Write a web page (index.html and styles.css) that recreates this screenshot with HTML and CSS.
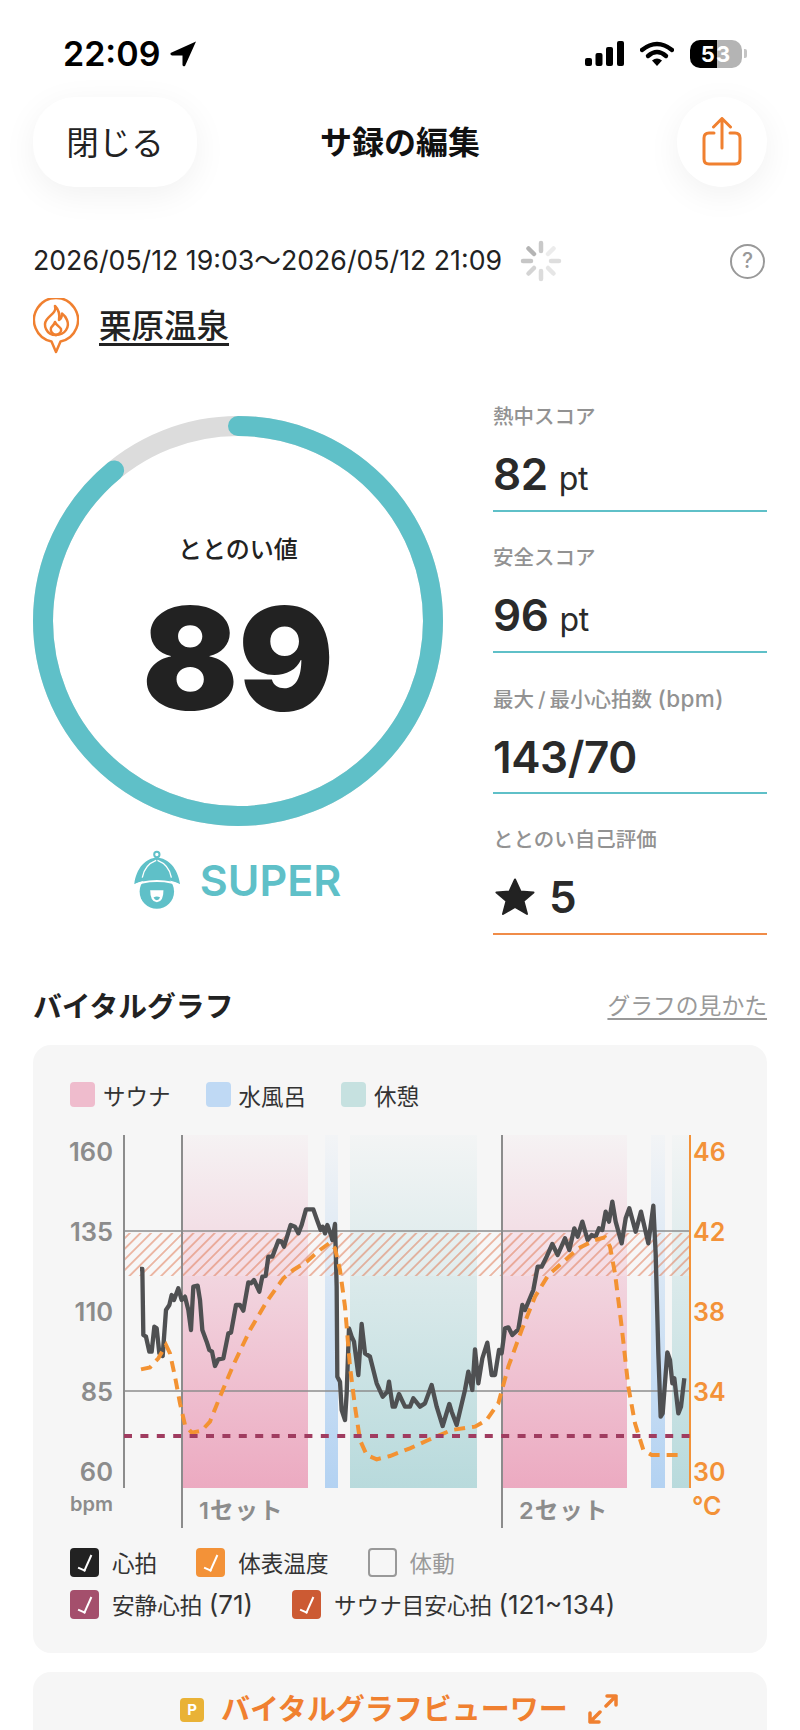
FILE: index.html
```html
<!DOCTYPE html>
<html lang="ja">
<head>
    <meta charset="UTF-8">
    <meta name="viewport" content="width=device-width, initial-scale=1.0">
    <title>サ録の編集</title>
    <link rel="stylesheet" href="styles.css">
</head>
<body>
<div class="page">
    <div class="status">
        <div class="status-left">
            <span class="clock">22:09</span>
            <svg class="loc" width="27" height="26" viewBox="0 0 27 26"><path d="M26 0.5 L0.5 12 Q0 14 2 14.5 L12.5 14.5 L12.5 24 Q13 26 15 25 Z" fill="#000"/></svg>
        </div>
        <div class="status-right">
            <svg width="39" height="25" viewBox="0 0 39 25"><rect x="0" y="17" width="7" height="8" rx="2"/><rect x="10.5" y="12" width="7" height="13" rx="2"/><rect x="21" y="6" width="7" height="19" rx="2"/><rect x="32" y="0" width="7" height="25" rx="2"/></svg>
            <svg width="34" height="25" viewBox="0 0 34 25"><path d="M2 9 Q17 -3 32 9" fill="none" stroke="#000" stroke-width="4.4" stroke-linecap="round"/><path d="M8 15 Q17 7 26 15" fill="none" stroke="#000" stroke-width="4.4" stroke-linecap="round"/><path d="M12 19.5 Q17 15.5 22 19.5 L17 25 Z" fill="#000"/></svg>
            <div class="battery"><span>53</span></div>
            <div class="battery-nub"></div>
        </div>
    </div>

    <div class="nav">
        <div class="close-btn"><span>閉じる</span></div>
        <div class="nav-title">サ録の編集</div>
        <div class="share-btn">
            <svg width="40" height="50" viewBox="0 0 40 50" fill="none" stroke="#f08030" stroke-width="3" stroke-linecap="round" stroke-linejoin="round"><path d="M20 31 V2 M11.5 10 L20 1.5 L28.500 10"/><path d="M12 16 H7 Q2 16 2 21 V42 Q2 47 7 47 H33 Q38 47 38 42 V21 Q38 16 33 16 H28"/></svg>
        </div>
    </div>

    <div class="date-row">
        <span class="date-text">2026/05/12 19:03〜2026/05/12 21:09</span>
        <svg class="spinner" width="42" height="42" viewBox="-21 -21 42 42" stroke-width="4.500" stroke-linecap="round">
            <line x1="0" y1="-10" x2="0" y2="-18" stroke="#c9c9c9"/>
            <line x1="7" y1="-7" x2="12.500" y2="-12.500" stroke="#ececec"/>
            <line x1="10" y1="0" x2="18" y2="0" stroke="#dedede"/>
            <line x1="7" y1="7" x2="12.500" y2="12.500" stroke="#e6e6e6"/>
            <line x1="0" y1="10" x2="0" y2="18" stroke="#dcdcdc"/>
            <line x1="-7" y1="7" x2="-12.500" y2="12.500" stroke="#d4d4d4"/>
            <line x1="-10" y1="0" x2="-18" y2="0" stroke="#c6c6c6"/>
            <line x1="-7" y1="-7" x2="-12.500" y2="-12.500" stroke="#b4b4b4"/>
        </svg>
        <span class="help">?</span>
    </div>

    <div class="place-row">
        <svg width="46" height="56" viewBox="0 0 46 56" fill="none" stroke="#f08030" stroke-width="2.500" stroke-linejoin="round" stroke-linecap="round">
            <path d="M18.500 43.500 A22 22 0 1 1 27.500 43.500 L23 54 Z"/>
            <path d="M22 8 C24 14 17 17 13.500 22 C10 27 13 37 23 37 C32 37 37 29 34 22 C33 19 31 17 29 15.500 C29 19 28 21 26 22 C27 16 25 11 22 8 Z"/>
            <path d="M23 37 C19 36 17 33 18 30 C19 28 21 27 22 24 C23 27 27 29 28 31 C29 34 26 36 23 37"/>
        </svg>
        <span class="place-name">栗原温泉</span>
    </div>

    <div class="hero">
        <div class="score-col">
            <div class="ring-wrap">
                <svg class="ring" width="410" height="410" viewBox="0 0 410 410" fill="none" stroke-width="20">
                    <circle cx="205" cy="205" r="195" stroke="#dcdcdc"/>
                    <circle cx="205" cy="205" r="195" stroke="#5fc0c8" stroke-linecap="round" stroke-dasharray="1090.5 1225.2" transform="rotate(-90 205 205)"/>
                </svg>
                <div class="ring-inner">
                    <div class="ring-label">ととのい値</div>
                    <div class="ring-value">89</div>
                </div>
            </div>
            <div class="rank">
                <svg width="53" height="60" viewBox="20 15 160 180">
                    <circle cx="98" cy="28" r="8" fill="none" stroke="#5fc0c8" stroke-width="6"/>
                    <circle cx="98" cy="140" r="52" fill="#5fc0c8"/>
                    <path d="M30 118 C35 70 65 38 98 38 C132 38 162 70 168 118 C140 100 60 100 30 118 Z" fill="#5fc0c8"/>
                    <path d="M22 126 C60 102 136 102 176 126" fill="none" stroke="#fff" stroke-width="6" stroke-linecap="round"/>
                    <path d="M96 46 C70 56 58 75 54 98 M100 46 C126 56 138 75 142 98" fill="none" stroke="#fff" stroke-width="4"/>
                    <path d="M78 136 H118 Q118 172 98 172 Q78 172 78 136 Z" fill="#fff"/>
                    <path d="M88 158 Q98 152 108 158 Q104 166 98 166 Q92 166 88 158 Z" fill="#5fc0c8"/>
                </svg>
                <span>SUPER</span>
            </div>
        </div>
        <div class="stats">
            <div class="stat">
                <div class="stat-label">熱中スコア</div>
                <div class="stat-value">82<span class="unit">pt</span></div>
            </div>
            <div class="stat">
                <div class="stat-label">安全スコア</div>
                <div class="stat-value">96<span class="unit">pt</span></div>
            </div>
            <div class="stat">
                <div class="stat-label">最大<span class="slash">/</span>最小心拍数 <span class="bpm">(bpm)</span></div>
                <div class="stat-value">143/70</div>
            </div>
            <div class="stat stat-self">
                <div class="stat-label">ととのい自己評価</div>
                <div class="stat-value">
                    <svg class="star" width="40" height="38" viewBox="0 0 40 38"><path d="M20 1.500 L25.500 13.500 L38.500 14.500 L28.500 23 L32 36 L20 29 L8 36 L11.500 23 L1.500 14.500 L14.500 13.500 Z" fill="#222" stroke="#222" stroke-width="2" stroke-linejoin="round"/></svg>
                    5
                </div>
            </div>
        </div>
    </div>

    <div class="graph-head">
        <h2>バイタルグラフ</h2>
        <a class="graph-help">グラフの見かた</a>
    </div>

    <div class="graph-card">
        <div class="legend">
            <div class="legend-item"><i class="sw sw-sauna"></i>サウナ</div>
            <div class="legend-item"><i class="sw sw-water"></i>水風呂</div>
            <div class="legend-item"><i class="sw sw-rest"></i>休憩</div>
        </div>

        <svg class="chart" width="734" height="410" viewBox="33 1125 734 410" fill="none">
            <defs>
                <linearGradient id="gSauna" x1="0" y1="0" x2="0" y2="1"><stop offset="0" stop-color="#ecaac1" stop-opacity=".05"/><stop offset="1" stop-color="#ecaac1"/></linearGradient>
                <linearGradient id="gWater" x1="0" y1="0" x2="0" y2="1"><stop offset="0" stop-color="#b3d2f2" stop-opacity=".05"/><stop offset="1" stop-color="#b3d2f2"/></linearGradient>
                <linearGradient id="gRest" x1="0" y1="0" x2="0" y2="1"><stop offset="0" stop-color="#b8dadc" stop-opacity=".05"/><stop offset="1" stop-color="#b8dadc"/></linearGradient>
                <pattern id="hatch" width="7.500" height="13" patternUnits="userSpaceOnUse" patternTransform="rotate(45)">
                    <rect width="7.500" height="13" fill="#fff" fill-opacity=".14"/>
                    <line x1="3.750" y1="0" x2="3.750" y2="13" stroke="#e07a55" stroke-opacity=".65" stroke-width="1.500"/>
                </pattern>
            </defs>

            <rect x="183" y="1135" width="125" height="353" fill="url(#gSauna)"/>
            <rect x="503" y="1135" width="124" height="353" fill="url(#gSauna)"/>
            <rect x="325" y="1135" width="13" height="353" fill="url(#gWater)"/>
            <rect x="651" y="1135" width="14" height="353" fill="url(#gWater)"/>
            <rect x="350" y="1135" width="127" height="353" fill="url(#gRest)"/>
            <rect x="672" y="1135" width="18" height="353" fill="url(#gRest)"/>

            <rect x="124" y="1233" width="566" height="43" fill="url(#hatch)"/>

            <line x1="124" y1="1231" x2="690" y2="1231" class="grid"/>
            <line x1="124" y1="1391" x2="690" y2="1391" class="grid"/>
            <line x1="124" y1="1135" x2="124" y2="1488" class="axis"/>
            <line x1="182" y1="1135" x2="182" y2="1528" class="axis"/>
            <line x1="502" y1="1135" x2="502" y2="1528" class="axis"/>
            <line x1="690" y1="1135" x2="690" y2="1488" class="axis-temp"/>

            <g transform="translate(30 1120) scale(.33333)">
                <polyline class="hr" points="330,447 337,447 340,645 348,650 358,695 365,695 373,620 380,625 388,700 398,708 408,570 418,555 425,525 432,540 445,505 455,540 465,530 475,570 483,630 490,500 503,497 510,540 517,630 530,665 538,690 546,695 555,738 565,718 580,715 595,640 603,638 618,555 630,555 640,572 655,487 663,490 672,480 688,515 697,470 707,468 715,410 727,410 745,362 755,365 762,380 782,315 795,320 805,340 815,315 828,268 850,268 860,297 872,330 878,320 885,340 892,315 903,345 907,360 915,312 920,500 922,770 930,785 935,870 945,900 950,820 957,625 965,650 972,665 985,765 995,612 1005,700 1020,710 1040,790 1058,830 1072,815 1077,785 1088,860 1095,860 1107,822 1125,860 1140,860 1150,835 1170,860 1185,850 1205,795 1220,860 1238,918 1258,852 1265,875 1280,915 1305,810 1315,755 1327,810 1335,688 1345,790 1357,715 1372,668 1385,765 1395,765 1407,690 1415,700 1425,625 1435,622 1447,645 1465,628 1477,555 1485,570 1510,510 1523,440 1535,440 1550,410 1567,372 1583,405 1605,355 1618,390 1633,325 1643,350 1657,305 1673,360 1685,345 1697,350 1707,325 1717,330 1727,275 1737,305 1747,245 1757,305 1775,370 1787,295 1798,265 1817,335 1833,275 1855,370 1870,257 1877,400 1885,700 1892,890 1898,880 1912,697 1920,720 1927,790 1933,775 1945,880 1953,860 1963,775"/>
                <polyline class="temp" points="333,748 360,742 385,715 408,675 420,700 435,770 450,850 465,915 485,938 515,932 540,905 570,830 610,735 660,630 710,545 760,475 790,450 830,425 870,390 900,368 915,385 930,450 945,560 960,740 975,860 990,960 1010,1005 1040,1018 1080,1008 1140,985 1195,960 1265,930 1335,920 1370,900 1405,850 1435,740 1475,630 1515,530 1555,465 1595,430 1645,385 1695,360 1725,352 1740,380 1755,460 1775,620 1795,800 1815,910 1840,990 1865,1005 1963,1005"/>
            </g>
            <line x1="124" y1="1436" x2="690" y2="1436" class="rest-line"/>

            <g class="tick">
                <text x="113" y="1161">160</text>
                <text x="113" y="1241">135</text>
                <text x="113" y="1321">110</text>
                <text x="113" y="1401">85</text>
                <text x="113" y="1481">60</text>
            </g>
            <g class="tick-temp">
                <text x="693" y="1161">46</text>
                <text x="693" y="1241">42</text>
                <text x="693" y="1321">38</text>
                <text x="693" y="1401">34</text>
                <text x="693" y="1481">30</text>
                <text x="692" y="1515">°C</text>
            </g>
            <text x="113" y="1511" class="unit-bpm">bpm</text>
            <text x="199" y="1519" class="set-label">1セット</text>
            <text x="519" y="1519" class="set-label">2セット</text>
        </svg>

        <div class="checks">
            <div class="check-row">
                <div class="check"><i class="box box-hr"></i><span>心拍</span></div>
                <div class="check"><i class="box box-temp"></i><span>体表温度</span></div>
                <div class="check check-off"><i class="box box-off"></i><span>体動</span></div>
            </div>
            <div class="check-row">
                <div class="check"><i class="box box-rest"></i><span>安静心拍 <span class="num">(71)</span></span></div>
                <div class="check"><i class="box box-target"></i><span>サウナ目安心拍 <span class="num">(121~134)</span></span></div>
            </div>
        </div>
    </div>

    <div class="viewer-card">
        <span class="p-badge">P</span>
        <span class="viewer-text">バイタルグラフビューワー</span>
        <svg width="30" height="30" viewBox="0 0 30 30" fill="none" stroke="#f08030" stroke-width="3.500" stroke-linecap="round" stroke-linejoin="round"><path d="M19 2 H28 V11 M28 2 L18 12"/><path d="M11 28 H2 V19 M2 28 L12 18"/></svg>
    </div>
</div>
</body>
</html>
```

FILE: styles.css
```css
* {
    box-sizing: border-box;
}
body {
    margin: 0;
    background: #fff;
    color: #222;
    font-family: "Inter", "Noto Sans CJK JP", sans-serif;
}
.page {
    width: 800px;
    height: 1730px;
    overflow: hidden;
    padding: 0 33px;
}

/* status bar */
.status {
    height: 97px;
    margin: 0 -33px;
    padding: 40px 53px 0 63px;
    display: flex;
    justify-content: space-between;
    align-items: flex-start;
    color: #000;
}
.status-left {
    display: flex;
    align-items: center;
    gap: 10px;
    height: 27px;
}
.clock {
    font-size: 34px;
    font-weight: 600;
}
.status-right {
    display: flex;
    align-items: center;
    gap: 16px;
    height: 27px;
}
.battery {
    width: 52px;
    height: 28px;
    border-radius: 10px;
    background: linear-gradient(90deg, #000 51%, #b4b4b4 51%);
    color: #fff;
    font-size: 22px;
    font-weight: 700;
    text-align: center;
    letter-spacing: 1px;
    line-height: 28px;
}
.battery-nub {
    width: 3px;
    height: 9px;
    margin-left: -14px;
    border-radius: 0 2px 2px 0;
    background: #c4c4c4;
}

/* nav */
.nav {
    height: 90px;
    display: grid;
    grid-template-columns: 1fr auto 1fr;
    align-items: center;
}
.close-btn {
    width: 164px;
    height: 90px;
    border-radius: 42px;
    background: #fff;
    box-shadow: 0 8px 34px rgba(0, 0, 0, 0.06);
    display: flex;
    align-items: center;
    justify-content: center;
    font-size: 32.5px;
    color: #222;
}
.close-btn span {
    margin-top: -4px;
}
.nav-title {
    font-size: 32px;
    font-weight: 700;
    color: #111;
    margin-top: -4px;
}
.share-btn {
    justify-self: end;
    width: 90px;
    height: 90px;
    border-radius: 50%;
    background: #fff;
    box-shadow: 0 8px 34px rgba(0, 0, 0, 0.06);
    display: flex;
    align-items: center;
    justify-content: center;
}

/* date + place */
.date-row {
    margin-top: 53px;
    height: 42px;
    display: flex;
    align-items: center;
}
.date-text {
    font-size: 26.7px;
    color: #222;
    margin-top: -6px;
}
.spinner {
    margin-left: 18px;
}
.help {
    margin-left: auto;
    margin-right: 2px;
    width: 35px;
    height: 35px;
    border: 2.5px solid #999;
    border-radius: 50%;
    color: #999;
    font-size: 21px;
    font-weight: 500;
    line-height: 30px;
    text-align: center;
}
.place-row {
    margin-top: 16px;
    display: flex;
    align-items: center;
    gap: 20px;
    height: 56px;
}
.place-name {
    font-size: 32.5px;
    font-weight: 500;
    color: #222;
    text-decoration: underline;
    text-underline-offset: 5px;
    margin-top: -5px;
}

/* hero */
.hero {
    margin-top: 17px;
    display: flex;
    justify-content: space-between;
}
.score-col {
    width: 410px;
    padding-top: 45px;
}
.ring-wrap {
    position: relative;
    width: 410px;
    height: 410px;
}
.ring {
    display: block;
}
.ring-inner {
    position: absolute;
    inset: 0;
    display: flex;
    flex-direction: column;
    align-items: center;
}
.ring-label {
    margin-top: 113px;
    font-size: 24px;
    font-weight: 500;
    line-height: 42px;
}
.ring-value {
    margin-top: 17px;
    font-size: 142px;
    font-weight: 900;
    line-height: 140px;
}
.rank {
    margin-top: 24px;
    padding-right: 4px;
    display: flex;
    align-items: center;
    justify-content: center;
    gap: 16px;
    color: #5fc0c8;
    font-size: 43px;
    font-weight: 600;
}
.rank span {
    line-height: 58px;
}
.stats {
    width: 274px;
}
.stat {
    height: 141px;
    padding-top: 32px;
    border-bottom: 2px solid #5fc0c8;
}
.stat-self {
    border-bottom-color: #f08c48;
}
.stat-label {
    font-size: 20.5px;
    font-weight: 500;
    line-height: 28px;
    color: #929292;
    white-space: nowrap;
}
.slash {
    margin: 0 4px;
}
.bpm {
    font-size: 22.5px;
    letter-spacing: 0.4px;
}
.stat-value {
    margin-top: 16px;
    font-size: 44px;
    font-weight: 600;
    line-height: 54px;
    letter-spacing: -0.4px;
    color: #2a2a2a;
    display: flex;
    align-items: baseline;
}
.unit {
    margin-left: 11px;
    font-size: 32px;
    font-weight: 400;
}
.star {
    align-self: center;
    margin: 0 14px 0 2px;
}

/* graph */
.graph-head {
    margin-top: 48px;
    display: flex;
    justify-content: space-between;
    align-items: center;
    height: 42px;
}
.graph-head h2 {
    margin: 0;
    font-size: 28.8px;
    font-weight: 700;
    color: #222;
}
.graph-help {
    font-size: 22.8px;
    color: #999;
    text-decoration: underline;
    text-underline-offset: 4px;
}
.graph-card {
    margin-top: 20px;
    height: 608px;
    padding-top: 37px;
    border-radius: 18px;
    background: #f6f6f6;
}
.legend {
    display: flex;
    padding-left: 37px;
    gap: 35px;
    height: 25px;
    margin-bottom: 18px;
}
.legend-item {
    display: flex;
    align-items: center;
    gap: 8px;
    font-size: 22.5px;
    color: #333;
}
.sw {
    width: 25px;
    height: 25px;
    border-radius: 4px;
}
.sw-sauna { background: #efbccd; }
.sw-water { background: #bfd9f4; }
.sw-rest { background: #c6e1e0; }

.chart {
    display: block;
}
.grid {
    stroke: #8c8c8c;
    stroke-width: 1.5;
}
.axis {
    stroke: #8c8c8c;
    stroke-width: 2;
}
.axis-temp {
    stroke: #f39238;
    stroke-width: 2;
}
.hr {
    fill: none;
    stroke: #4f5052;
    stroke-width: 13;
    stroke-linejoin: round;
}
.temp {
    fill: none;
    stroke: #f39232;
    stroke-width: 12;
    stroke-dasharray: 33 21;
}
.rest-line {
    stroke: #a03c60;
    stroke-width: 4;
    stroke-dasharray: 8 8.4;
}
.tick text,
.tick-temp text {
    font-weight: 600;
}
.tick {
    fill: #8c8c8c;
    font-size: 25.5px;
    text-anchor: end;
}
.tick-temp {
    fill: #f39238;
    font-size: 25px;
}
.unit-bpm {
    fill: #8c8c8c;
    font-size: 20px;
    font-weight: 600;
    text-anchor: end;
}
.set-label {
    fill: #8c8c8c;
    font-size: 23.5px;
    font-weight: 600;
    letter-spacing: 1px;
}

.checks {
    margin-top: 13px;
    padding-left: 37px;
    display: flex;
    flex-direction: column;
    gap: 13px;
}
.check-row {
    display: flex;
    gap: 39px;
    height: 29px;
}
.check {
    display: flex;
    align-items: center;
    gap: 13px;
    font-size: 22.6px;
    color: #333;
}
.num {
    font-size: 26px;
}
.check-off {
    color: #999;
}
.box {
    width: 29px;
    height: 29px;
    border-radius: 4px;
    position: relative;
}
.box::after {
    content: "";
    position: absolute;
    left: 11px;
    top: 5px;
    width: 6px;
    height: 16px;
    border-right: 2px solid #fff;
    border-bottom: 2px solid #fff;
    transform: rotate(24deg);
}
.box-hr { background: #222; }
.box-temp { background: #f39238; }
.box-rest { background: #a44f6c; }
.box-target { background: #cc5a33; }
.box-off {
    border: 2.5px solid #999;
}
.box-off::after {
    display: none;
}

.viewer-card {
    margin-top: 19px;
    height: 100px;
    border-radius: 18px;
    background: #f6f6f6;
    padding: 22px 0 0 147px;
    display: flex;
    align-items: flex-start;
}
.p-badge {
    width: 24px;
    height: 24px;
    margin-top: 4px;
    border-radius: 4px;
    background: #e9b236;
    color: #fff;
    font-size: 15px;
    font-weight: 700;
    line-height: 24px;
    text-align: center;
}
.viewer-text {
    margin-left: 17px;
    font-size: 29px;
    font-weight: 700;
    line-height: 32px;
    color: #f08030;
}
.viewer-card svg {
    margin-left: 20px;
}
```
